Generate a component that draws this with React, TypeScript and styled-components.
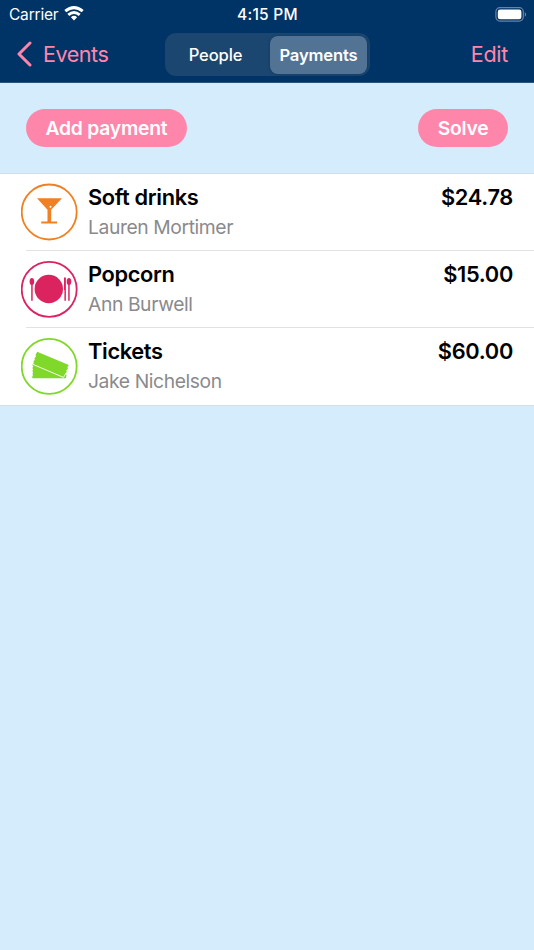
import React from 'react';
import styled, { createGlobalStyle } from 'styled-components';

const GlobalStyle = createGlobalStyle`
  * { box-sizing: border-box; }
  body { margin: 0; background: #d5ecfc; font-family: Inter, "Liberation Sans", sans-serif; }
  button { font: inherit; border: 0; padding: 0; background: none; }
`;

const Screen = styled.div`
  width: 534px;
  height: 950px;
  overflow: hidden;
  background: #d5ecfc;
`;

const Header = styled.header`
  height: 83px;
  background: #003366;
  border-bottom: 1px solid #2a5580;
`;

const StatusBar = styled.div`
  display: grid;
  grid-template-columns: 1fr auto 1fr;
  align-items: center;
  height: 27px;
  padding: 1px 7px 0 9px;
  color: #fff;
  font-size: 15.5px;
  line-height: 26px;
`;

const Carrier = styled.div`
  display: flex;
  align-items: center;
  gap: 5.5px;
  padding-top: 1px;
  letter-spacing: -0.2px;
  svg { margin-top: -3px; }
`;

const Clock = styled.div`
  padding-top: 1px;
  font-weight: 500;
  letter-spacing: 0.25px;
  transform: translateX(-0.5px);
`;

const BatteryIcon = styled.svg`
  justify-self: end;
  margin-top: -1px;
`;

const NavBar = styled.nav`
  display: grid;
  grid-template-columns: 165px 204.5px 1fr;
  align-items: start;
  height: 55px;
  padding-top: 6px;
`;

const NavButton = styled.button<{ $end?: boolean }>`
  display: flex;
  align-items: center;
  justify-self: ${p => (p.$end ? 'end' : 'start')};
  gap: 11px;
  height: 42px;
  padding: ${p => (p.$end ? '0 26px 0 0' : '0 0 0 16px')};
  color: #ff86ab;
  font-size: 21.6px;
  letter-spacing: ${p => (p.$end ? '-0.3px' : '-0.5px')};
`;

const Segments = styled.div`
  display: grid;
  grid-template-columns: 1fr 97px;
  gap: 5px;
  height: 43px;
  padding: 3px 2.5px 2.5px 0;
  border-radius: 11px;
  background: #1a466f;
`;

const Segment = styled.button<{ $active?: boolean }>`
  padding-left: ${p => (p.$active ? '0' : '1px')};
  border-radius: 8px;
  background: ${p => (p.$active ? '#537395' : 'transparent')};
  box-shadow: ${p => (p.$active ? '0 0 2px 1px rgba(0, 45, 90, 0.25)' : 'none')};
  color: #fff;
  font-size: 16.6px;
  font-weight: ${p => (p.$active ? 600 : 500)};
  letter-spacing: -0.15px;
`;

const Actions = styled.div`
  display: flex;
  justify-content: space-between;
  height: 91px;
  padding: 26px 26px 0;
  border-bottom: 1px solid #d2dfe9;
`;

const Pill = styled.button<{ $width: number }>`
  width: ${p => p.$width}px;
  height: 38px;
  border-radius: 19px;
  background: #ff86ab;
  color: #fff;
  font-size: 19.3px;
  font-weight: 600;
  letter-spacing: -0.22px;
`;

const List = styled.ul`
  margin: 0;
  padding: 0;
  list-style: none;
  background: #fff;
  border-bottom: 1px solid #d2dfe9;
`;

const Row = styled.li`
  display: flex;
  height: 77px;
  padding: 9px 21px 0;
  background: linear-gradient(#e2e2e4, #e2e2e4) 26px 100% / 100% 1px no-repeat;
  &:last-child { background: none; }
`;

const Details = styled.div`
  flex: 1;
  padding-left: 10px;
`;

const Title = styled.div`
  color: #000;
  font-size: 21.8px;
  font-weight: 600;
  line-height: 28px;
  letter-spacing: -0.35px;
`;

const Payer = styled.div`
  margin-top: 2px;
  color: #8a8a8d;
  font-size: 19.3px;
  line-height: 28px;
  letter-spacing: -0.4px;
`;

const Amount = styled(Title)`
  letter-spacing: -0.3px;
`;

const Badge = styled.svg`
  flex: none;
  width: 57px;
  height: 58px;
`;

const Cocktail = () => (
  <Badge viewBox="0 0 57 58">
    <circle cx="28.2" cy="29" r="27.5" fill="none" stroke="#f08022" strokeWidth="1.8" />
    <path d="M16 15.2H41L30.2 26.8V38.4H36V40.4H20.3V38.4H26.5V26.8Z" fill="#f08022" />
    <circle cx="29.5" cy="23.8" r="1" fill="#fff" />
  </Badge>
);

const Dinner = () => (
  <Badge viewBox="0 0 57 58">
    <circle cx="28.2" cy="29.3" r="27.5" fill="none" stroke="#db235f" strokeWidth="1.8" />
    <g fill="#db235f">
      <circle cx="27.8" cy="29" r="14.2" />
      <ellipse cx="10.9" cy="21.5" rx="2.3" ry="3.5" />
      <path d="M10.2 24H11.7V40.8H10.2Z" />
      <path d="M43 17.4H44.9V40.8H43.4V30H43Z" />
      <ellipse cx="48" cy="21.5" rx="2.3" ry="3.5" />
      <path d="M47.2 24H48.7V40.8H47.2Z" />
    </g>
  </Badge>
);

const Tickets = () => (
  <Badge viewBox="0 0 57 58">
    <circle cx="28.2" cy="29.4" r="27.5" fill="none" stroke="#80d82a" strokeWidth="1.8" />
    <path d="M16.2 14.8L47.8 28.1L46.4 30.2L46.9 31.6L45.3 33.4L45.8 34.9L44.5 36.4L45.6 38L44.8 41.2H11.3V39L12.2 38L11.3 36.8L12.2 35.5L11.3 34L12.2 32.5L11.3 31L12.2 29.5L11.3 28L12.8 26L12.4 24.6L13.9 22.8L13.4 21.2L15 19.5L14.5 18Z" fill="#80d82a" />
    <path d="M12 27.4L42.5 40.4L45.2 35.8" fill="none" stroke="#fff" strokeWidth="0.9" />
  </Badge>
);

const payments = [
  { title: 'Soft drinks', payer: 'Lauren Mortimer', amount: '$24.78', Icon: Cocktail },
  { title: 'Popcorn', payer: 'Ann Burwell', amount: '$15.00', Icon: Dinner },
  { title: 'Tickets', payer: 'Jake Nichelson', amount: '$60.00', Icon: Tickets },
];

export default function App() {
  return (
    <Screen>
      <GlobalStyle />
      <Header>
        <StatusBar>
          <Carrier>
            Carrier
            <svg width="20" height="15" viewBox="0 0 20 15" fill="none" stroke="#fff" strokeWidth="3">
              <path d="M1.3 5.2Q10 -2 18.7 5.2" />
              <path d="M4.3 8.8Q10 4.1 15.7 8.8" />
              <path d="M6.9 11.2Q10 8.5 13.1 11.2L10 14.5Z" fill="#fff" stroke="none" />
            </svg>
          </Carrier>
          <Clock>4:15 PM</Clock>
          <BatteryIcon width="32" height="15" viewBox="0 0 32 15">
            <rect x="0.9" y="0.7" width="27.4" height="13.4" rx="4" fill="none" stroke="#6683a3" strokeWidth="1.2" />
            <rect x="2.8" y="2.6" width="23.6" height="9.6" rx="2.3" fill="#fff" />
            <path d="M29.8 5Q32.2 7.4 29.8 9.8Z" fill="#7891ac" />
          </BatteryIcon>
        </StatusBar>
        <NavBar>
          <NavButton>
            <svg width="16" height="26" viewBox="0 0 16 26" fill="none" stroke="#ff86ab" strokeWidth="3" strokeLinecap="round" strokeLinejoin="round">
              <path d="M14 2L3 13L14 24" />
            </svg>
            Events
          </NavButton>
          <Segments>
            <Segment>People</Segment>
            <Segment $active>Payments</Segment>
          </Segments>
          <NavButton $end>Edit</NavButton>
        </NavBar>
      </Header>
      <Actions>
        <Pill $width={161}>Add payment</Pill>
        <Pill $width={90}>Solve</Pill>
      </Actions>
      <List>
        {payments.map(({ title, payer, amount, Icon }) => (
          <Row key={title}>
            <Icon />
            <Details>
              <Title>{title}</Title>
              <Payer>{payer}</Payer>
            </Details>
            <Amount>{amount}</Amount>
          </Row>
        ))}
      </List>
    </Screen>
  );
}
